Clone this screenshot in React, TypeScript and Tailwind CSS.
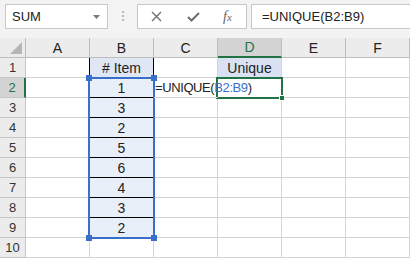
import React from "react";

const cols = ["A", "B", "C", "D", "E", "F"];
const items = [1, 3, 2, 5, 6, 4, 3, 2];

function Toolbar() {
  return (
    <div className="relative flex h-[38px] items-start bg-[#f3f3f3] pt-[4px]">
      {/* name box */}
      <div className="ml-[5px] flex h-[25px] w-[103px] items-center justify-between border border-[#c8c8c8] bg-white pl-[6px] pr-[7px]">
        <span className="text-[13px] text-[#222]">SUM</span>
        <svg width="7" height="4" viewBox="0 0 7 4">
          <path d="M0 0 L7 0 L3.5 4 Z" fill="#7a7a7a" />
        </svg>
      </div>
      {/* splitter dots */}
      <div className="ml-[14px] mt-[7px] flex flex-col gap-[2px]">
        <span className="h-[2px] w-[2px] bg-[#b8b8b8]" />
        <span className="h-[2px] w-[2px] bg-[#b8b8b8]" />
        <span className="h-[2px] w-[2px] bg-[#b8b8b8]" />
      </div>
      {/* cancel / enter / fx */}
      <div className="ml-[13px] flex h-[25px] w-[110px] items-center border border-[#c8c8c8] bg-white">
        <svg className="ml-[13px]" width="11" height="11" viewBox="0 0 11 11">
          <path d="M1 1 L10 10 M10 1 L1 10" stroke="#6e6e6e" strokeWidth="1.4" />
        </svg>
        <svg className="ml-[25px]" width="13" height="10" viewBox="0 0 13 10">
          <path d="M1 5 L4.5 8.5 L12 1" stroke="#6e6e6e" strokeWidth="2" fill="none" />
        </svg>
        <span className="ml-[23px] font-['Liberation_Serif'] text-[14px] italic text-[#666]">
          f<span className="text-[11px]">x</span>
        </span>
      </div>
      {/* formula box */}
      <div className="ml-[4px] flex h-[25px] flex-1 items-center border border-r-0 border-[#c8c8c8] bg-white pl-[10px]">
        <span className="font-['Liberation_Sans'] text-[13px] text-[#222]">=UNIQUE(B2:B9)</span>
      </div>
    </div>
  );
}

function ColHeaders() {
  return (
    <>
      <div className="relative border-r border-b border-[#bdbdbd] bg-[#ececec]">
        <svg className="absolute bottom-[3px] right-[3px]" width="12" height="12" viewBox="0 0 12 12">
          <path d="M12 0 L12 12 L0 12 Z" fill="#b5b5b5" />
        </svg>
      </div>
      {cols.map((c) =>
        c === "D" ? (
          <div
            key={c}
            className="flex items-center justify-center border-r border-b-2 border-r-[#bdbdbd] border-b-[#217346] bg-[#d3d3d3] text-[14px] text-[#217346]"
          >
            {c}
          </div>
        ) : (
          <div
            key={c}
            className="flex items-center justify-center border-r border-b border-[#bdbdbd] bg-[#ececec] text-[14px] text-[#222]"
          >
            {c}
          </div>
        ),
      )}
    </>
  );
}

function RowHeader({ n }: { n: number }) {
  if (n === 2) {
    return (
      <div className="flex items-center justify-center border-r-2 border-b border-r-[#217346] border-b-[#c6c6c6] bg-[#d3d3d3] text-[13px] text-[#217346]">
        {n}
      </div>
    );
  }
  return (
    <div className="flex items-center justify-center border-r border-b border-[#c6c6c6] bg-[#ececec] text-[13px] text-[#333]">
      {n}
    </div>
  );
}

function Row({ n }: { n: number }) {
  const inTable = n <= 9;
  return (
    <>
      <RowHeader n={n} />
      {/* A */}
      <div
        className={
          inTable
            ? "border-r border-b border-r-black border-b-[#d4d4d4]"
            : "border-r border-b border-[#d4d4d4]"
        }
      />
      {/* B */}
      {n === 1 ? (
        <div className="flex items-center justify-center border-r border-b border-black bg-[#dfe7f5] text-[14px] text-[#222]">
          # Item
        </div>
      ) : inTable ? (
        <div className="flex items-center justify-center border-r border-b border-black bg-[#e9eff8] text-[14px] text-[#222]">
          {items[n - 2]}
        </div>
      ) : (
        <div className="border-r border-b border-[#d4d4d4]" />
      )}
      {/* C — the formula being edited in D2 spills over C2 */}
      {n === 2 ? (
        <div className="relative z-30 flex items-center border-b border-[#d4d4d4] pl-[1px]">
          <span className="whitespace-nowrap text-[13px] tracking-[-0.4px] text-[#222]">
            =UNIQUE(<span className="text-[#3a6fc9]">B2:B9</span>)
          </span>
          <span className="ml-[1px] h-[15px] w-[1px] bg-black" />
        </div>
      ) : (
        <div className="border-r border-b border-[#d4d4d4]" />
      )}
      {/* D */}
      {n === 1 ? (
        <div className="flex items-center justify-center border-r border-b border-[#d4d4d4] bg-[#d9e1f2] text-[14px] text-[#222]">
          Unique
        </div>
      ) : (
        <div className="border-r border-b border-[#d4d4d4]" />
      )}
      <div className="border-r border-b border-[#d4d4d4]" />
      <div className="border-r border-b border-[#d4d4d4]" />
    </>
  );
}

export default function App() {
  const rows = [1, 2, 3, 4, 5, 6, 7, 8, 9, 10];
  return (
    <div className="h-[259px] w-[410px] overflow-hidden bg-white font-['Liberation_Sans'] leading-none">
      <Toolbar />
      <div className="relative grid grid-cols-[26px_repeat(6,64px)] grid-rows-[repeat(11,20px)]">
        <ColHeaders />
        {rows.map((n) => (
          <Row key={n} n={n} />
        ))}

        {/* formula reference range B2:B9 */}
        <div className="pointer-events-none absolute left-[88px] top-[39px] z-20 h-[162px] w-[67px] border-2 border-[#3a6fc9]" />
        <span className="absolute left-[86px] top-[37px] z-30 h-[6px] w-[6px] bg-[#3a6fc9]" />
        <span className="absolute left-[151px] top-[37px] z-30 h-[6px] w-[6px] bg-[#3a6fc9]" />
        <span className="absolute left-[86px] top-[197px] z-30 h-[6px] w-[6px] bg-[#3a6fc9]" />
        <span className="absolute left-[151px] top-[197px] z-30 h-[6px] w-[6px] bg-[#3a6fc9]" />

        {/* active cell D2 */}
        <div className="pointer-events-none absolute left-[216px] top-[39px] z-20 h-[22px] w-[67px] border-2 border-[#217346]" />
        <span className="absolute left-[279px] top-[57px] z-30 h-[6px] w-[6px] border border-white bg-[#217346]" />
      </div>
    </div>
  );
}
